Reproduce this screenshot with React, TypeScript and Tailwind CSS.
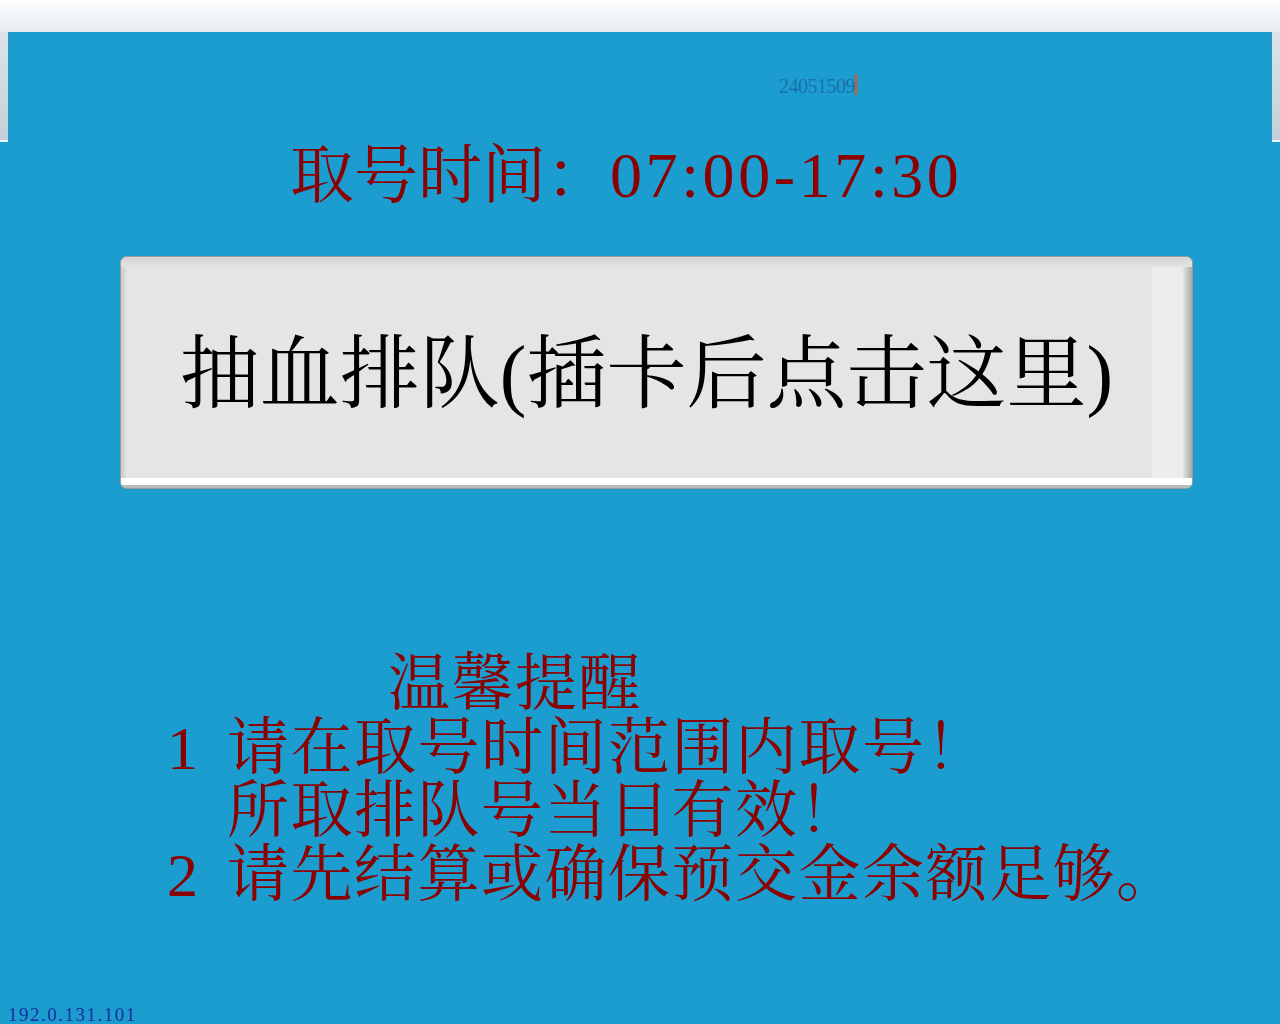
import React from 'react';

const serifCjk = "[font-family:'Liberation_Serif','Noto_Serif_CJK_SC','Noto_Sans_CJK_SC',serif]";

const notices: { num: string; text: string }[] = [
  { num: '1', text: '请在取号时间范围内取号！' },
  { num: '', text: '所取排队号当日有效！' },
  { num: '2', text: '请先结算或确保预交金余额足够。' },
];

const QueueButton: React.FC = () => (
  <button
    type="button"
    className="ml-[120px] flex h-[233px] w-[1073px] flex-col overflow-hidden rounded-[7px] border border-[#9c9c9c] bg-[#e5e5e5] p-0 text-left"
  >
    <div className="h-[10px] w-full shrink-0 bg-gradient-to-b from-[#d4d4d4] to-[#e3e3e3]" />
    <div className="flex w-full flex-1">
      <div className="w-[6px] shrink-0 bg-gradient-to-r from-[#c9c9c9] to-[#e4e4e4]" />
      <div className="flex flex-1 items-center justify-center pl-[14px] pt-[2px]">
        <span className={`${serifCjk} whitespace-nowrap text-[80px] leading-none text-black`}>
          抽血排队(插卡后点击这里)
        </span>
      </div>
      <div className="w-[31px] shrink-0 bg-[#ececec]" />
      <div className="w-[9px] shrink-0 bg-gradient-to-r from-[#e2e2e2] to-[#a9a9a9]" />
    </div>
    <div className="h-[7px] w-full shrink-0 bg-white" />
    <div className="h-[3px] w-full shrink-0 bg-[#b9b9b9]" />
  </button>
);

export default function App() {
  return (
    <div className="flex h-[1024px] w-full flex-col overflow-hidden bg-[#1b9ecf]">
      {/* window top strip */}
      <div className="h-[32px] w-full shrink-0 bg-gradient-to-b from-[#fbfdfe] to-[#e8edf0]" />

      {/* header panel with side rails */}
      <div className="flex h-[110px] w-full shrink-0">
        <div className="w-[8px] shrink-0 border-b-[2px] border-[#eaf6fb] bg-gradient-to-b from-[#dde3e8] to-[#c6cfd7]" />
        <div className="flex flex-1 items-start pl-[771px] pt-[44px]">
          <span className="[font-family:'Liberation_Serif',serif] text-[20px] leading-[20px] tracking-[-0.5px] text-[#1c6fae]">
            24051509
          </span>
          <span className="mt-[-2px] h-[21px] w-[2px] bg-[#e0541c]" />
        </div>
        <div className="w-[8px] shrink-0 border-b-[2px] border-[#eaf6fb] bg-gradient-to-b from-[#dde3e8] to-[#c6cfd7]" />
      </div>

      {/* opening hours */}
      <div className={`${serifCjk} mt-[2px] whitespace-nowrap pl-[290px] text-[64px] leading-[64px] text-[#8b0000]`}>
        取号时间：<span className="tracking-[3.6px]">07:00-17:30</span>
      </div>

      <div className="mt-[48px]">
        <QueueButton />
      </div>

      {/* reminders */}
      <div className={`${serifCjk} mt-[164px] text-[62px] leading-[63.5px] tracking-[1.5px] text-[#8b0000]`}>
        <div className="pl-[388px]">温馨提醒</div>
        {notices.map((n, i) => (
          <div key={i} className="flex whitespace-nowrap pl-[163px]">
            <span className="w-[64px] shrink-0 pl-[4px]">{n.num}</span>
            <span>{n.text}</span>
          </div>
        ))}
      </div>

      <div className="mt-auto pl-[8px] [font-family:'Liberation_Serif',serif] text-[19px] leading-[18px] tracking-[1.5px] text-[#1a2fa0]">
        192.0.131.101
      </div>
    </div>
  );
}
